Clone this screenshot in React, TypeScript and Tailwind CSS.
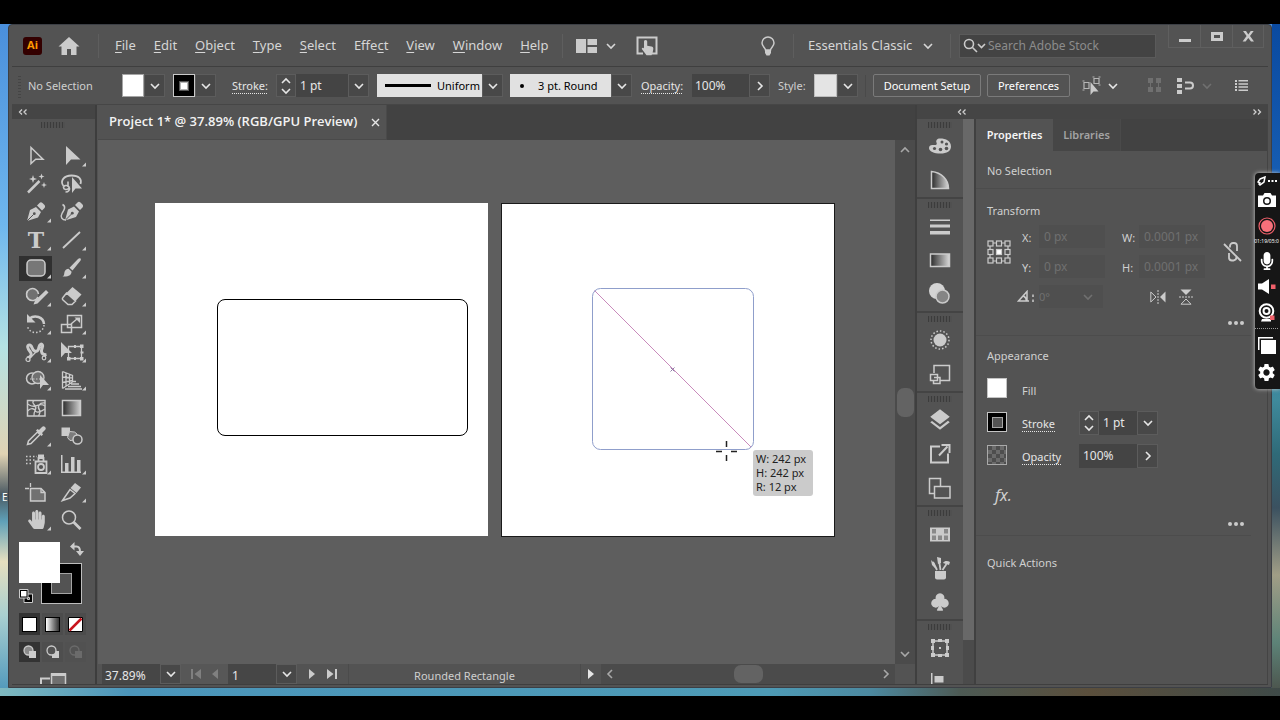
import type { ReactNode } from "react";
import clsx from "clsx";
import { BsSuitClubFill } from "react-icons/bs";
import { FaHandPaper, FaMicrophone } from "react-icons/fa";
import { MdLayers, MdSettings } from "react-icons/md";

const INK = "#cbcbcb";

/* ---------- small shared pieces ---------- */

type Dir = "up" | "down" | "left" | "right";

const CHEVRONS: Record<Dir, string> = {
  up: "M1 7l4-4 4 4",
  down: "M1 3l4 4 4-4",
  left: "M7 1L3 5l4 4",
  right: "M3 1l4 4-4 4",
};

function Chevron({ dir = "down", className }: { dir?: Dir; className?: string }) {
  return (
    <svg viewBox="0 0 10 10" className={clsx("size-[10px] shrink-0", className)} fill="none" stroke="currentColor" strokeWidth="1.6">
      <path d={CHEVRONS[dir]} />
    </svg>
  );
}

function DropButton({ label, dir = "down" }: { label: string; dir?: Dir }) {
  return (
    <button aria-label={label} className="flex w-[21px] shrink-0 items-center justify-center self-stretch border border-[#5c5c5c] bg-[#484848] text-[#e6e6e6]">
      <Chevron dir={dir} />
    </button>
  );
}

function Stepper({ label }: { label: string }) {
  return (
    <div className="flex w-5 flex-col items-center justify-center self-stretch border border-[#5c5c5c] bg-[#4b4b4b] text-[#e6e6e6]">
      <button aria-label={`Increase ${label}`} className="flex h-[10px] items-center">
        <Chevron dir="up" />
      </button>
      <button aria-label={`Decrease ${label}`} className="flex h-[10px] items-center">
        <Chevron />
      </button>
    </div>
  );
}

function Grip() {
  return <div className="h-[6px] w-6 bg-[repeating-linear-gradient(90deg,#3c3c3c_0_1px,#505050_1px_3px)]" />;
}

function DoubleChevron({ dir }: { dir: "left" | "right" }) {
  return (
    <svg viewBox="0 0 10 8" className="h-2 w-[10px]" fill="none" stroke="#cfcfcf" strokeWidth="1.3">
      <path d={dir === "left" ? "M4 1.5L1.5 4 4 6.5M8.500 1.500L6 4l2.500 2.500" : "M1.500 1.500L4 4 1.500 6.500M6 1.500L8.500 4 6 6.500"} />
    </svg>
  );
}

function Dots() {
  return (
    <svg viewBox="0 0 18 4" className="h-1 w-[18px]" fill={INK}>
      <circle cx="3" cy="2" r="2" />
      <circle cx="9" cy="2" r="2" />
      <circle cx="15" cy="2" r="2" />
    </svg>
  );
}

/* ---------- menu bar ---------- */

const MENUS = [
  ["", "F", "ile"],
  ["", "E", "dit"],
  ["", "O", "bject"],
  ["", "T", "ype"],
  ["", "S", "elect"],
  ["Effe", "c", "t"],
  ["", "V", "iew"],
  ["", "W", "indow"],
  ["", "H", "elp"],
];

function MenuBar() {
  return (
    <header className="flex h-[42px] shrink-0 items-center border-b border-[#3f3f3f] pl-[11px] text-[13px] text-[#d6d6d6]">
      <div className="flex h-[18px] w-[19px] items-center justify-center rounded-[3px] bg-[#330000] text-[11px] font-bold text-[#ff9a00]">Ai</div>
      <button aria-label="Home" className="ml-4">
        <svg viewBox="0 0 22 20" className="h-5 w-[22px]" fill={INK}>
          <path d="M11 1L.500 10.500H3.500V19H9V13h4v6h5.500v-8.500h3z" />
        </svg>
      </button>
      <div className="ml-[18px] h-6 w-px bg-[#5e5e5e]" />
      <nav className="ml-4 flex gap-[18px]">
        {MENUS.map(([before, key, after]) => (
          <button key={before + key + after}>
            {before}
            <span className="underline underline-offset-2">{key}</span>
            {after}
          </button>
        ))}
      </nav>
      <div className="ml-[14px] h-6 w-px bg-[#5e5e5e]" />
      <button aria-label="Arrange documents" className="ml-[13px] flex items-center gap-[9px]">
        <svg viewBox="0 0 21 14" className="h-[14px] w-[21px]" fill={INK}>
          <path d="M0 0h10v14H0zM11.500 0H21v6h-9.500zM11.500 8H21v6h-9.500z" />
        </svg>
        <Chevron />
      </button>
      <button aria-label="Touch workspace" className="ml-5">
        <svg viewBox="0 0 22 20" className="h-5 w-[22px]">
          <path d="M7 17.500H1.500V1.500h19v16H16" fill="none" stroke={INK} strokeWidth="2" />
          <path d="M9.500 4c1.200 0 1.700.8 1.700 1.800v4l4.300.8c1.300.3 2 1 1.800 2.300l-.8 4.600-1 1.700h-5L6 13.300c-.7-1 .6-2.100 1.600-1.300l.4.400V5.800C8 4.800 8.400 4 9.500 4z" fill={INK} />
        </svg>
      </button>

      <div className="ml-auto flex items-center self-stretch">
        <button aria-label="Learn">
          <svg viewBox="0 0 16 20" className="h-5 w-4">
            <path d="M5.500 14c0-2-3.500-3.500-3.500-7a6 6 0 0112 0c0 3.500-3.500 5-3.500 7z" fill="none" stroke={INK} strokeWidth="1.500" />
            <path d="M5 14h6v3l-1.500 2.500h-3L5 17z" fill={INK} />
          </svg>
        </button>
        <div className="ml-[17px] h-6 w-px bg-[#5e5e5e]" />
        <label className="ml-[14px] flex items-center gap-[9px]">
          <select aria-label="Workspace" className="w-[106px] appearance-none text-[13px]">
            <option>Essentials Classic</option>
          </select>
          <Chevron />
        </label>
        <div className="ml-[17px] h-6 w-px bg-[#5e5e5e]" />
        <label className="ml-2 flex h-6 w-[197px] items-center border border-[#5a5a5a] bg-[#434343] pl-[3px]">
          <svg viewBox="0 0 23 16" className="h-4 w-[23px] shrink-0" fill="none" stroke={INK} strokeWidth="1.600">
            <circle cx="6" cy="6" r="4.500" />
            <path d="M9.500 9.500L14 14M15 6l3.500 3.500L22 6" />
          </svg>
          <input aria-label="Search Adobe Stock" placeholder="Search Adobe Stock" className="ml-[2px] w-full text-[12px] placeholder:text-[#8c8c8c]" />
        </label>
        <div className="mr-1 ml-3 flex h-[23px] self-start border-b border-[#5f5f5f]">
          {[
            ["Minimize", "M1 9h12v3H1z"],
            ["Maximize", "M1 2h12v9H1zM4 5v3h6V5z"],
            ["Close", "M2 1h3l2.300 3.500L9.700 1h3L9 6l4 5.500h-3L7.300 8l-2.700 3.500h-3L5.600 6z"],
          ].map(([name, d]) => (
            <button key={name} aria-label={name} className="flex w-8 items-center justify-center border-l border-[#5f5f5f] last:border-r">
              <svg viewBox="0 0 14 13" className="h-[13px] w-[14px]" fill={INK} fillRule="evenodd">
                <path d={d} />
              </svg>
            </button>
          ))}
        </div>
      </div>
    </header>
  );
}

/* ---------- control bar ---------- */

function ControlBar() {
  return (
    <div className="flex h-[38px] shrink-0 items-center border-b border-[#464646] pl-[6px] text-[11px] leading-[18px] text-[#e6e6e6]">
      <div className="h-6 w-[3px] bg-[repeating-linear-gradient(0deg,#454545_0_1px,#535353_1px_3px)]" />
      <span className="ml-[7px] w-[94px] text-[#cfcfcf]">No Selection</span>

      <div className="flex h-[23px]">
        <button aria-label="Fill" className="w-[22px] border border-[#a5a5a5] bg-white" />
        <DropButton label="Fill options" />
      </div>
      <div className="ml-2 flex h-[23px]">
        <button aria-label="Stroke colour" className="flex w-[22px] items-center justify-center border border-[#c9c9c9] bg-black">
          <span className="size-2 border border-[#b5b5b5] bg-white ring-1 ring-[#555]" />
        </button>
        <DropButton label="Stroke colour options" />
      </div>

      <label htmlFor="bar-stroke" className="ml-4 w-11 shrink-0 underline decoration-dotted underline-offset-3">
        Stroke:
      </label>
      <div className="flex h-[23px]">
        <Stepper label="stroke" />
        <input id="bar-stroke" defaultValue="1 pt" className="w-[52px] bg-[#444444] pl-1 text-[12px]" />
        <DropButton label="Stroke weights" />
      </div>

      <div className="ml-2 flex h-[23px]">
        <label className="flex w-[105px] items-center gap-[6px] bg-[#e1e1e1] pl-2 text-black">
          <span className="h-[3px] w-[46px] shrink-0 bg-black" />
          <select aria-label="Width profile" className="w-full appearance-none">
            <option>Uniform</option>
          </select>
        </label>
        <DropButton label="Width profiles" />
      </div>
      <div className="ml-[7px] flex h-[23px]">
        <label className="flex w-[101px] items-center gap-[14px] bg-[#e1e1e1] pl-[10px] text-black">
          <span className="size-1 shrink-0 rounded-full bg-black" />
          <select aria-label="Brush" className="w-full appearance-none">
            <option>3 pt. Round</option>
          </select>
        </label>
        <DropButton label="Brushes" />
      </div>

      <label htmlFor="bar-opacity" className="ml-[9px] w-[51px] shrink-0 underline decoration-dotted underline-offset-3">
        Opacity:
      </label>
      <div className="flex h-[23px]">
        <input id="bar-opacity" defaultValue="100%" className="w-[57px] bg-[#444444] pl-[3px] text-[12px]" />
        <DropButton label="Opacity slider" dir="right" />
      </div>

      <span className="ml-2 w-9 text-[#cfcfcf]">Style:</span>
      <div className="flex h-[23px]">
        <button aria-label="Graphic style" className="w-[23px] border border-[#bdbdbd] bg-[#e4e4e4]" />
        <DropButton label="Graphic styles" />
      </div>
      <div className="ml-[7px] h-[22px] w-px bg-[#4a4a4a]" />
      <button className="ml-[7px] h-[23px] w-[108px] shrink-0 rounded-[2px] border border-[#7a7a7a] text-white">Document Setup</button>
      <button className="ml-[6px] h-[23px] w-[83px] shrink-0 rounded-[2px] border border-[#7a7a7a] text-white">Preferences</button>

      <button aria-label="Select similar objects" className="ml-3 flex items-center gap-[6px]">
        <svg viewBox="0 0 20 20" className="size-5" fill="none" stroke="#b5b5b5" strokeWidth="1.200">
          <path d="M2 6.500h5v6H2zM12 2.500h5v5h-5zM.500 5h2M.500 14h2M10.500 1h2M16.500 1h2M16.500 9h2" />
          <path d="M8.500 6v13l3-3.500h5z" fill={INK} stroke="none" />
        </svg>
        <Chevron />
      </button>

      <div className="mr-5 ml-auto flex items-center">
        <svg viewBox="0 0 13 15" className="h-[15px] w-[13px]" fill="#707070">
          <path d="M0 0h5v5H0zM8 0h5v5H8zM0 9h5v5H0zM8 9h5v5H8zM2 5h1v4H2zM10 5h1v4h-1z" />
        </svg>
        <button aria-label="Align to" className="ml-4 flex items-center gap-[7px]">
          <svg viewBox="0 0 18 16" className="h-4 w-[18px]" fill={INK}>
            <path d="M0 0h5v4H0zM0 6h5v4H0zM0 12h5v4H0z" />
            <path d="M8 4.500h5a3 3 0 010 6H8" fill="none" stroke={INK} strokeWidth="2" />
          </svg>
          <Chevron className="text-[#707070]" />
        </button>
        <button aria-label="Bar options" className="ml-[23px]">
          <svg viewBox="0 0 13 11" className="h-[11px] w-[13px]" fill={INK}>
            <path d="M0 0h2v2H0zM3.500 0H13v1.500H3.500zM0 3h2v2H0zM3.500 3.200H13v1.500H3.500zM0 6h2v2H0zM3.500 6.300H13v1.500H3.500zM0 9h2v2H0zM3.500 9.400H13v1.500H3.500z" />
          </svg>
        </button>
      </div>
    </div>
  );
}

/* ---------- tools ---------- */

type Tool = { name: string; art: ReactNode; more?: boolean; active?: boolean };

const nib = "M7 21l3-11 6-3 5 5-3 5.500zM17 5.500l2.500-2.500c1-1 2-.8 3 0l2 2c.8 1 .8 2 0 3L22 10.500z";

const TOOLS: Tool[] = [
  { name: "Selection", art: <path d="M11 3.500v16l4.700-4.200H23z" fill="none" strokeWidth="1.500" /> },
  { name: "Direct selection", more: true, art: <path d="M11 2v19l5-5.500h9.500z" stroke="none" /> },
  {
    name: "Magic wand",
    art: (
      <>
        <path d="M8 20.500L19.500 9" strokeWidth="2.500" />
        <path d="M13 3l1 3 3 1-3 1-1 3-1-3-3-1 3-1zM21.500 1.500l.8 2.200 2.200.8-2.200.8-.8 2.200-.8-2.200-2.200-.8 2.200-.8zM24 10l.8 2.200 2.200.8-2.200.8L24 16l-.8-2.200-2.200-.8 2.200-.8z" stroke="none" />
      </>
    ),
  },
  {
    name: "Lasso",
    art: (
      <>
        <path d="M8.500 14C4.500 9 9 3.500 16.500 3.500S27 7 25.500 12" fill="none" strokeWidth="1.800" />
        <path d="M14 16c-2 2.500-5.500 1.500-5.500-.5s4-3 5.500-.5c1.500 2.500-.5 5-3.500 5M13 9.500V15" fill="none" strokeWidth="1.600" />
        <path d="M17 5v16l3.500-4.500H27z" stroke="none" />
      </>
    ),
  },
  {
    name: "Pen",
    more: true,
    art: (
      <>
        <path d={nib} stroke="none" />
        <path d="M7 21l6.500-6.500" stroke="#535353" strokeWidth="1" />
        <circle cx="14.300" cy="13.700" r="1.400" fill="#535353" stroke="none" />
      </>
    ),
  },
  {
    name: "Curvature",
    art: (
      <>
        <g transform="translate(3 -.500)">
          <path d={nib} stroke="none" />
          <path d="M7 21l6.500-6.500" stroke="#535353" strokeWidth="1" />
          <circle cx="14.300" cy="13.700" r="1.400" fill="#535353" stroke="none" />
        </g>
        <path d="M7.500 4.500c4 2 1.500 5.500-.5 9s0 6.500 4 6.500" fill="none" strokeWidth="1.500" />
      </>
    ),
  },
  {
    name: "Type",
    more: true,
    art: (
      <text x="16" y="20" textAnchor="middle" stroke="none" className="font-['DejaVu_Serif',serif] text-[22px] font-bold">
        T
      </text>
    ),
  },
  { name: "Line segment", more: true, art: <path d="M8 20L25 4" strokeWidth="1.800" /> },
  { name: "Rounded rectangle", more: true, active: true, art: <rect x="7" y="4" width="18" height="16" rx="4" fill="#777" strokeWidth="1.500" /> },
  {
    name: "Paintbrush",
    more: true,
    art: (
      <path d="M25.500 2.500c.8.800.3 1.700-.3 2.500l-7.700 9.500-3-2.800L23 3c.8-.7 1.700-1.200 2.500-.5zM13.500 12.700l3 2.800c.3 3.500-3 5.500-9 5 2-1 1.500-2.500 2-4.500s2-3.300 4-3.300z" stroke="none" />
    ),
  },
  {
    name: "Shaper",
    more: true,
    art: (
      <>
        <path d="M18 13a6 6 0 11.500-3" fill="#717171" strokeWidth="1.600" />
        <path d="M13.500 20.500l1.500-4L26 6l2.500 2.500-11 11z" stroke="none" />
      </>
    ),
  },
  {
    name: "Eraser",
    more: true,
    art: (
      <>
        <path d="M17.500 3L26.500 10.500l-6 6.500-9-8z" stroke="none" />
        <path d="M11.500 9l9 8-3.500 3.500h-4l-5-4.500c-.8-.8-.8-1.700 0-2.500z" fill="none" strokeWidth="1.500" />
      </>
    ),
  },
  {
    name: "Rotate",
    more: true,
    art: (
      <>
        <path d="M9.500 6.500c5-4 14-2 14.500 5.500" fill="none" strokeWidth="2.500" />
        <path d="M7 2v8.500h8.500z" stroke="none" />
        <path d="M24 13c-.5 9-14 10.500-16.500 1.500" fill="none" strokeWidth="1.500" strokeDasharray="1.500 2" />
      </>
    ),
  },
  {
    name: "Scale",
    more: true,
    art: (
      <>
        <path d="M12.500 3.500h14v12h-14zM6.500 12.500h10v8h-10z" fill="none" strokeWidth="1.500" />
        <path d="M16 12l6-5" strokeWidth="1.500" />
        <path d="M19.500 5.500H25V11z" stroke="none" />
      </>
    ),
  },
  {
    name: "Puppet warp",
    more: true,
    art: (
      <>
        <path d="M7 18c5-1 5-4 3-6.500C7.500 8.500 6.500 5 9.500 5s2 5 5 6 4-1 4.500-4 2.500-3.500 3.500-2-1.500 4-1 6.500 2.500 3.500 5 3" fill="none" strokeWidth="3" />
        <path d="M8.500 19.500L23 5" strokeWidth="1.300" />
        <circle cx="8" cy="19.500" r="2" fill="#535353" strokeWidth="1.200" />
        <circle cx="24" cy="18" r="1.800" fill="#535353" strokeWidth="1.200" />
      </>
    ),
  },
  {
    name: "Free transform",
    more: true,
    art: (
      <>
        <path d="M13.500 6.500h13v12h-13z" fill="none" strokeWidth="1.300" />
        <path d="M25 4.500h3.500V8H25zM25 17h3.500v3.500H25zM12 17h3.500v3.500H12zM19 5h2v3h-2zM19 17h2v3h-2zM25.500 11.500h3v2h-3z" stroke="none" />
        <path d="M6 2v15.500l4-4.500h7z" stroke="none" />
      </>
    ),
  },
  {
    name: "Shape builder",
    more: true,
    art: (
      <>
        <circle cx="12" cy="10.500" r="5.500" fill="none" strokeWidth="1.500" />
        <circle cx="18" cy="9.500" r="6" fill="#717171" strokeWidth="1.300" />
        <path d="M10 11h11" strokeDasharray="1.500 1.500" />
        <path d="M20 7v14l3-4h6z" stroke="none" />
      </>
    ),
  },
  {
    name: "Perspective grid",
    more: true,
    art: (
      <path d="M7.500 3.500v17M7.500 3.500l10 4v6.500l-10 6.500M11 5v13M14.500 6.500V16M7.500 9l10 .8M7.500 14.500l10-2M18 13.500h3M16 16h8M13 18.500h13M10 21h17" fill="none" strokeWidth="1.300" />
    ),
  },
  {
    name: "Mesh",
    art: (
      <>
        <path d="M7.500 4.500h17.500v15.500H7.500z" fill="none" strokeWidth="1.500" />
        <path d="M14 4.500c-4 3 4 5 1.500 9-1 2-2 4-1.500 6.500M25 7c-6-1-8 4-5.500 7 1.500 2 0 4-1 6M7.500 8c4 2 4 3 8 2s5-3 9.500 0M7.500 15c4-4 7-2 8 0s5 1 9.500-2" fill="none" strokeWidth="1.300" />
      </>
    ),
  },
  { name: "Gradient", art: <rect x="7.500" y="4.500" width="18" height="15" fill="url(#grad-ramp)" strokeWidth="1.500" /> },
  {
    name: "Eyedropper",
    more: true,
    art: (
      <>
        <path d="M7.500 20.500l1-3.500 9-9 2.500 2.500-9 9z" fill="none" strokeWidth="1.500" />
        <path d="M16 6.500l1.500-1.500 1.500 1 3-3c1-1 2.300-.8 3 0 1 .8 1 2 0 3l-3 3 1 1.500L21.500 12z" stroke="none" />
      </>
    ),
  },
  {
    name: "Blend",
    art: (
      <>
        <path d="M6.500 3.500H15V12H6.500z" stroke="none" />
        <path d="M14.500 7.500l5 .5 2.500 2-2 6-5 .500-2.500-3z" fill="#7c7c7c" />
        <circle cx="22.500" cy="15.500" r="4.500" fill="#535353" strokeWidth="1.500" />
      </>
    ),
  },
  {
    name: "Symbol sprayer",
    more: true,
    art: (
      <>
        <path d="M15.500 9.500h11v11.500h-11zM18.500 9V6h5v3" fill="none" strokeWidth="1.800" />
        <path d="M18 2.500h6v4h-6z" stroke="none" />
        <circle cx="21" cy="15" r="3" fill="none" strokeWidth="1.800" />
        <path d="M6 4.500h11M6 8h9M6 11.500h7" strokeWidth="1.500" strokeDasharray="1.500 2" />
      </>
    ),
  },
  { name: "Column graph", more: true, art: <path d="M6 3v18h20v-1.500H7.500V3zM10 11h3.500v8.500H10zM16 5h3.500v14.500H16zM22 8h3.500v11.500H22z" stroke="none" /> },
  {
    name: "Artboard",
    art: (
      <>
        <path d="M10.500 8.500H21l4 4v8.500H10.500z" fill="#717171" strokeWidth="1.500" />
        <path d="M5 8.500h4M10.500 3v4M21 8.500v4h4" fill="none" strokeWidth="1.300" />
      </>
    ),
  },
  {
    name: "Slice",
    more: true,
    art: (
      <>
        <path d="M7.500 20.500L15 9.500l5 4-5 4.500z" fill="none" strokeWidth="1.500" />
        <path d="M15.500 8l4.500-5 6 4.500-4.500 5.500z" stroke="none" />
      </>
    ),
  },
  { name: "Hand", more: true, art: <FaHandPaper x="7" y="2" size={19} color={INK} strokeWidth="0" /> },
  {
    name: "Zoom",
    art: (
      <>
        <circle cx="14" cy="9.500" r="6.500" fill="none" strokeWidth="1.500" />
        <path d="M18.500 14l7 7" strokeWidth="2.800" />
      </>
    ),
  },
];

function ToolPanel() {
  return (
    <aside className="flex w-[85px] shrink-0 flex-col border-r-2 border-[#3d3d3d]">
      <div className="flex h-[14px] shrink-0 items-center bg-[#454545] pl-[6px]">
        <DoubleChevron dir="left" />
      </div>
      <div className="flex min-h-0 flex-1 flex-col overflow-hidden pl-[7px]">
        <div className="flex h-[23px] shrink-0 justify-center pt-[3px] pr-2">
          <Grip />
        </div>
        <div className="grid shrink-0 grid-cols-[35px_35px]">
          {TOOLS.map((tool) => (
            <div key={tool.name} className="flex h-7 items-center">
              <button aria-label={tool.name} className={clsx("flex h-[25px] w-[33px] items-center justify-center", tool.active && "bg-[#303030]")}>
                <svg viewBox="0 0 32 24" className="h-6 w-8" fill={INK} stroke={INK}>
                  <defs>
                    <linearGradient id="grad-ramp">
                      <stop offset="0" stopColor="#2a2a2a" />
                      <stop offset="1" stopColor="#d0d0d0" />
                    </linearGradient>
                  </defs>
                  {tool.art}
                  {tool.more && <path d="M31 18.500v4h-4z" stroke="none" />}
                </svg>
              </button>
            </div>
          ))}
        </div>

        {/* fill and stroke */}
        <div className="relative mt-2 h-[64px] w-[70px] shrink-0">
          <button aria-label="Stroke swatch" className="absolute top-[21px] left-[22px] flex size-[41px] items-center justify-center border border-[#bdbdbd] bg-black">
            <span className="size-[21px] border border-[#a5a5a5] bg-[#535353]" />
          </button>
          <button aria-label="Fill swatch" className="absolute top-0 left-0 size-[41px] bg-white" />
          <button aria-label="Swap fill and stroke" className="absolute top-0 left-[51px]">
            <svg viewBox="0 0 14 14" className="size-[14px]">
              <path d="M3 4.500h3.500c2 0 3.500 1 3.500 5" fill="none" stroke={INK} strokeWidth="2" />
              <path d="M4.500 0v8.500L0 4.500zM6 9h8l-4 5z" fill={INK} />
            </svg>
          </button>
          <button aria-label="Default fill and stroke" className="absolute top-[47px] left-0">
            <svg viewBox="0 0 14 14" className="size-[14px]">
              <path d="M5 5h8.500v8.500H5z" fill="#000" stroke={INK} />
              <path d="M8.500 8.500h2v2h-2z" fill="#535353" stroke={INK} />
              <path d="M.500.500h8.500v8.500H.500z" fill="#000" stroke={INK} />
              <path d="M2 2h5.500v5.500H2z" fill="#fff" />
            </svg>
          </button>
        </div>
        <div className="mt-[7px] flex shrink-0 gap-[2px]">
          <button aria-label="Color" className="flex h-[22px] w-[21px] items-center justify-center bg-[#333]">
            <span className="size-[15px] border border-black bg-white" />
          </button>
          <button aria-label="Gradient fill" className="flex h-[22px] w-[21px] items-center justify-center bg-[#4c4c4c]">
            <span className="size-[15px] border border-black bg-linear-to-r from-white to-[#333]" />
          </button>
          <button aria-label="None" className="flex h-[22px] w-[21px] items-center justify-center bg-[#4c4c4c]">
            <svg viewBox="0 0 15 15" className="size-[15px]">
              <path d="M.500.500h14v14H.500z" fill="#fff" stroke="#000" />
              <path d="M1.500 13.500l12-12" stroke="#c8141e" strokeWidth="2.500" />
            </svg>
          </button>
        </div>
        <div className="mt-[7px] flex shrink-0 gap-[2px]">
          {["Draw normal", "Draw behind", "Draw inside"].map((name, i) => (
            <button key={name} aria-label={name} className={clsx("flex h-5 w-[21px] items-center justify-center", i === 0 ? "bg-[#333]" : "bg-[#4e4e4e]", i === 2 && "opacity-20")}>
              <svg viewBox="0 0 14 14" className="size-[14px]">
                <path d="M6 6h7v7H6z" fill={INK} />
                <circle cx="5.500" cy="5.500" r="4.500" fill={i === 0 ? "#8a8a8a" : "#535353"} stroke={INK} strokeWidth="1.300" />
                {i !== 1 && <path d="M6 6h7v7H6z" fill={INK} />}
              </svg>
            </button>
          ))}
        </div>
        <button aria-label="Screen mode" className="mt-[10px] ml-[21px] h-[13px] w-[27px] shrink-0 overflow-hidden">
          <svg viewBox="0 0 27 13" className="h-[13px] w-[27px]">
            <path d="M1 13V6.500h9" fill="none" stroke={INK} strokeWidth="2" />
            <path d="M11.500 13V2h14v11" fill="#6f6f6f" stroke={INK} strokeWidth="1.500" />
            <path d="M11 1h15v3H11z" fill={INK} />
          </svg>
        </button>
      </div>
    </aside>
  );
}

/* ---------- document ---------- */

function Canvas() {
  return (
    <div className="relative min-w-0 flex-1 overflow-hidden bg-[#5e5e5e]">
      <div className="absolute top-[63px] left-[57px] size-[333px] bg-white" />
      <div className="absolute top-[63px] left-[403px] size-[334px] border border-[#1a1a1a] bg-white" />
      <div className="absolute top-[159px] left-[119px] h-[137px] w-[251px] rounded-lg border border-black" />
      <svg viewBox="0 0 180 180" className="absolute top-[147px] left-[493px] size-[180px]" fill="none">
        <rect x="1.500" y="1.500" width="161" height="161" rx="8" stroke="#8f9ecb" />
        <path d="M3.500 3.500L160 160" stroke="#c98bbb" />
        <path d="M79.500 80.500l4 4M83.500 80.500l-4 4" stroke="#8d7fa8" />
        <path d="M135.500 154v6M135.500 168v6M125 164.500h6M140 164.500h6" stroke="#222" strokeWidth="1.500" />
      </svg>
      <div className="absolute top-[310px] left-[655px] w-[60px] rounded-[3px] bg-[#cbcbcb] px-[3px] py-[2px] text-[11px] leading-[14px] text-[#222]">
        <p>W: 242 px</p>
        <p>H: 242 px</p>
        <p>R: 12 px</p>
      </div>
    </div>
  );
}

function StatusBar() {
  return (
    <footer className="flex h-5 shrink-0 items-stretch bg-[#535353] pl-1 text-[12px] leading-4 text-[#e6e6e6]">
      <input aria-label="Zoom level" defaultValue="37.89%" className="w-[58px] bg-[#464646] pt-1 pl-[3px]" />
      <DropButton label="Zoom levels" />
      <div className="flex w-[47px] items-center justify-center gap-[11px] bg-[#575757]">
        <button aria-label="First artboard" disabled>
          <svg viewBox="0 0 10 10" className="size-[10px]" fill="#808080">
            <path d="M0 0h2v10H0zM10 0v10L3.500 5z" />
          </svg>
        </button>
        <button aria-label="Previous artboard" disabled>
          <svg viewBox="0 0 6 10" className="h-[10px] w-[6px]" fill="#808080">
            <path d="M6 0v10L0 5z" />
          </svg>
        </button>
      </div>
      <input aria-label="Artboard" defaultValue="1" className="w-[48px] bg-[#464646] pt-1 pl-1" />
      <DropButton label="Artboards" />
      <div className="flex w-[52px] items-center justify-center gap-3 border-r border-[#4b4b4b]">
        <button aria-label="Next artboard">
          <svg viewBox="0 0 6 10" className="h-[10px] w-[6px]" fill={INK}>
            <path d="M0 0v10l6-5z" />
          </svg>
        </button>
        <button aria-label="Last artboard">
          <svg viewBox="0 0 10 10" className="size-[10px]" fill={INK}>
            <path d="M0 0v10l6.500-5zM8 0h2v10H8z" />
          </svg>
        </button>
      </div>
      <span className="flex w-[231px] items-center justify-center pt-1 text-[11px] text-[#cfcfcf]">Rounded Rectangle</span>
      <button aria-label="Status options" className="flex w-[21px] items-center justify-center border-l border-[#4b4b4b]">
        <svg viewBox="0 0 6 10" className="h-[10px] w-[6px]" fill="#e6e6e6">
          <path d="M0 0v10l6-5z" />
        </svg>
      </button>
      <div className="flex flex-1 items-center justify-between bg-[#4b4b4b] px-1 text-[#a8a8a8]">
        <Chevron dir="left" />
        <div className="h-[18px] w-[29px] rounded-[7px] bg-[#636363]" />
        <Chevron dir="right" />
      </div>
      <div className="w-5" />
    </footer>
  );
}

function DocumentArea() {
  return (
    <main className="flex min-w-0 flex-1 flex-col pl-px">
      <div className="flex h-[35px] shrink-0 bg-[#424242]">
        <div className="flex w-[289px] items-center justify-between border-r border-b border-[#4a4a4a] bg-[#535353] pr-[6px] pl-[11px]">
          <h1 className="font-['Open_Sans','Noto_Sans',sans-serif] text-[13px] font-semibold whitespace-nowrap text-[#f2f2f2]">Project 1* @ 37.89% (RGB/GPU Preview)</h1>
          <button aria-label="Close document">
            <svg viewBox="0 0 9 9" className="size-[9px]" stroke="#e6e6e6" strokeWidth="1.400">
              <path d="M1 1l7 7M8 1L1 8" />
            </svg>
          </button>
        </div>
      </div>
      <div className="flex min-h-0 flex-1">
        <Canvas />
        <div className="flex w-5 shrink-0 flex-col items-center justify-between bg-[#4b4b4b] py-[5px] text-[#a8a8a8]">
          <Chevron dir="up" />
          <div className="h-[29px] w-[17px] rounded-[7px] bg-[#636363]" />
          <Chevron />
        </div>
      </div>
      <StatusBar />
    </main>
  );
}

/* ---------- collapsed panel dock ---------- */

const DOCK: { name: string; art: ReactNode }[][] = [
  [
    {
      name: "Color",
      art: (
        <>
          <path d="M12 4.500c6 0 11 2.500 11 8 0 4.500-4 7-10.500 7C6 19.500 1 17.500 1 14c0-2.500 2-3.500 4.500-3 2.500.3 4-.5 3-2.500-.8-1.800.5-4 3.500-4z" stroke="none" />
          <g fill="#535353" stroke="none">
            <circle cx="14" cy="8" r="1.500" />
            <circle cx="18.500" cy="10" r="1.600" />
            <circle cx="18.500" cy="14.500" r="1.800" />
            <circle cx="12.500" cy="15.500" r="1.800" />
            <circle cx="6.500" cy="14.500" r="1.600" />
          </g>
        </>
      ),
    },
    { name: "Color guide", art: <path d="M3.500 3.500v17h17c0-9-7-16-17-17z" fill="url(#dock-ramp)" strokeWidth="1.500" /> },
  ],
  [
    { name: "Stroke", art: <path d="M2 5.500h20v1.500H2zM2 10.500h20v3H2zM2 17h20v3.500H2z" stroke="none" /> },
    { name: "Gradient", art: <rect x="2.500" y="6" width="19" height="12.500" fill="url(#dock-ramp)" strokeWidth="1.500" /> },
    {
      name: "Transparency",
      art: (
        <>
          <circle cx="9" cy="9" r="8" fill="#d4d4d4" stroke="none" />
          <circle cx="14.500" cy="14.500" r="6.500" fill="#858585" strokeWidth="1.500" />
        </>
      ),
    },
  ],
  [
    {
      name: "Appearance",
      art: (
        <>
          <circle cx="12" cy="12" r="6.500" stroke="none" />
          <circle cx="12" cy="12" r="9" fill="none" strokeWidth="1.500" strokeDasharray="1.500 2" />
        </>
      ),
    },
    {
      name: "Graphic styles",
      art: <path d="M6 11V3.500h15.500v15H12M2.500 12.500h7v6h-7zM6 15.500h6v6H5.500v-3" fill="none" strokeWidth="1.500" />,
    },
  ],
  [
    { name: "Layers", art: <MdLayers x="-1" y="-1" size={26} color={INK} strokeWidth="0" /> },
    {
      name: "Asset export",
      art: (
        <>
          <path d="M12 4.500H3v16h17v-9" fill="none" strokeWidth="2" />
          <path d="M11 13.500l8.500-9M13.500 3h8v8" fill="none" strokeWidth="2" />
        </>
      ),
    },
    { name: "Artboards", art: <path d="M6 17.500H1.500V2.500h11V10M6.500 10.500h15.500v11.500H6.500z" fill="none" strokeWidth="1.500" /> },
  ],
  [
    {
      name: "Swatches",
      art: (
        <>
          <path d="M2 5.500h20v14H2z" stroke="none" />
          <path d="M4 7h4v4.500H4zM4 13.500h4V18H4zM10 13.500h4V18h-4zM16 13.500h4V18h-4zM16 7h4v4.500h-4z" fill="#8a8a8a" stroke="none" />
        </>
      ),
    },
    {
      name: "Brushes",
      art: (
        <>
          <path d="M7 15h11v6.500a2 2 0 01-2 2H9a2 2 0 01-2-2z" stroke="none" />
          <path d="M9 14L5 6M12.500 14L11 4M14.500 14l4-6" strokeWidth="1.800" />
          <path d="M3 4l4 4v4L4 9zM9 1l4 1v5l-3 1zM15 7c2-3 5-2 7-1l-1 3z" stroke="none" />
        </>
      ),
    },
    { name: "Symbols", art: <BsSuitClubFill x="2" y="2" size={20} color={INK} /> },
  ],
  [
    {
      name: "Transform",
      art: (
        <>
          <path d="M5 5h14v14H5z" fill="none" strokeWidth="1.500" />
          <path d="M3 3h4v4H3zM10 3h4v3h-4zM17 3h4v4h-4zM3 10h3v4H3zM18 10h3v4h-3zM3 17h4v4H3zM10 18h4v3h-4zM17 17h4v4h-4zM11 11h2v2h-2z" stroke="none" />
        </>
      ),
    },
    { name: "Align", art: <path d="M3 3h1.500v19H3zM6.500 6h9v6.500h-9zM6.500 15h14v6h-14z" stroke="none" /> },
  ],
];

function PanelDock() {
  return (
    <aside className="flex min-h-0 flex-1">
      <div className="flex w-[46px] flex-col overflow-hidden">
        {DOCK.map((group) => (
          <div key={group[0].name} className="flex shrink-0 flex-col items-center border-b-2 border-[#444444] pt-[3px]">
            <Grip />
            <div className="flex flex-col py-px">
              {group.map((panel) => (
                <button key={panel.name} aria-label={panel.name} className="flex h-[34px] w-[46px] items-center justify-center last:h-[33px]">
                  <svg viewBox="0 0 24 24" className="size-6" fill={INK} stroke={INK}>
                    <defs>
                      <linearGradient id="dock-ramp">
                        <stop offset="0" stopColor="#2a2a2a" />
                        <stop offset="1" stopColor="#d8d8d8" />
                      </linearGradient>
                    </defs>
                    {panel.art}
                  </svg>
                </button>
              ))}
            </div>
          </div>
        ))}
      </div>
      <div className="flex w-[11px] flex-col bg-[#4b4b4b] pb-[44px]">
        <div className="flex-1 bg-[#686868]" />
      </div>
    </aside>
  );
}

/* ---------- properties ---------- */

function TransformField({ id, label, value }: { id: string; label: string; value: string }) {
  return (
    <div className="flex items-center">
      <label htmlFor={id} className="w-[17px] pt-[3px] text-[#cfcfcf]">
        {label}
      </label>
      <input id={id} defaultValue={value} disabled className="h-[23px] w-[66px] bg-[#4f4f4f] pl-[5px] text-[12px] text-[#707070]" />
    </div>
  );
}

function PropertiesPanel() {
  return (
    <aside className="flex min-h-0 flex-1 flex-col text-[11px] leading-[18px] text-[#d0d0d0]">
      <div role="tablist" className="flex h-8 shrink-0 bg-[#424242] font-semibold">
        <button role="tab" aria-selected="true" className="w-[77px] bg-[#535353] text-[#f5f5f5]">
          Properties
        </button>
        <button role="tab" aria-selected="false" className="w-[68px] border-r border-[#4a4a4a] bg-[#464646] text-[#a3a3a3]">
          Libraries
        </button>
      </div>

      <h2 className="mr-4 h-[38px] shrink-0 border-b border-[#4c4c4c] pt-[11px] pl-[11px]">No Selection</h2>

      <section className="mr-4 h-[147px] shrink-0 border-b border-[#4c4c4c] pt-[13px] pl-[11px]">
        <h2>Transform</h2>
        <div className="mt-[5px] flex items-center">
          <svg viewBox="0 0 24 24" className="size-6" fill="none" stroke={INK} strokeWidth="1.200">
            <path d="M3 3h18v18H3z" />
            {[1, 9.5, 18].map((y) =>
              [1, 9.5, 18].map((x) => (
                <rect key={`${x}-${y}`} x={x} y={y} width="5" height="5" fill={x === 9.5 && y === 9.5 ? "#fff" : "#535353"} />
              ))
            )}
          </svg>
          <div className="ml-[11px] grid grid-cols-[100px_94px] gap-y-[7px]">
            <TransformField id="prop-x" label="X:" value="0 px" />
            <TransformField id="prop-w" label="W:" value="0.0001 px" />
            <TransformField id="prop-y" label="Y:" value="0 px" />
            <TransformField id="prop-h" label="H:" value="0.0001 px" />
          </div>
          <button aria-label="Constrain proportions" className="ml-[6px]">
            <svg viewBox="0 0 20 22" className="h-[22px] w-5" fill="none" stroke={INK} strokeWidth="1.800">
              <path d="M8 6.500V5a3 3 0 013-3h1a3 3 0 013 3v5M14.500 16a3.500 3.500 0 01-3 3.500H10A3 3 0 017 17v-5" />
              <path d="M2 3l17 17" />
            </svg>
          </button>
        </div>
        <div className="mt-[7px] flex items-center pl-[30px]">
          <label className="flex items-center">
            <svg viewBox="0 0 18 13" className="h-[13px] w-[18px]" fill="none" stroke={INK} strokeWidth="1.500">
              <path d="M12 11H1.500L10 1.500V11M6.500 6a6 6 0 013 5" />
              <path d="M16 4.500V7M16 9.500V12" />
            </svg>
            <select disabled aria-label="Rotate" className="ml-1 h-[23px] w-[44px] appearance-none bg-[#4f4f4f] text-[#707070] opacity-100">
              <option>0°</option>
            </select>
            <span className="flex h-[23px] w-[20px] items-center bg-[#4f4f4f] text-[#707070]">
              <Chevron />
            </span>
          </label>
          <button aria-label="Flip horizontal" className="ml-[47px]">
            <svg viewBox="0 0 16 14" className="h-[14px] w-4" fill={INK} stroke={INK}>
              <path d="M.800 2v10L6 7z" fill="none" />
              <path d="M15.500 1.500v11L10 7z" stroke="none" />
              <path d="M8 0v14" strokeDasharray="2 1" />
            </svg>
          </button>
          <button aria-label="Flip vertical" className="ml-[13px]">
            <svg viewBox="0 0 14 16" className="h-4 w-[14px]" fill={INK} stroke={INK}>
              <path d="M2 15.200h10L7 10z" fill="none" />
              <path d="M1.500.500h11L7 6z" stroke="none" />
              <path d="M0 8h14" strokeDasharray="2 1" />
            </svg>
          </button>
        </div>
        <button aria-label="More transform options" className="mt-[13px] ml-[240px] flex h-1 items-center">
          <Dots />
        </button>
      </section>

      <section className="mr-4 h-[200px] shrink-0 border-b border-[#4c4c4c] pt-[11px] pl-[11px]">
        <h2>Appearance</h2>
        <div className="mt-[13px] flex h-[33px] items-start">
          <button aria-label="Fill color" className="size-5 border border-[#c4c4c4] bg-white" />
          <span className="ml-[15px] pt-1">Fill</span>
        </div>
        <div className="flex h-[33px] items-start">
          <button aria-label="Stroke color" className="mt-px flex size-5 items-center justify-center border border-[#c4c4c4] bg-black">
            <span className="size-[11px] border border-[#a5a5a5] bg-[#535353]" />
          </button>
          <label htmlFor="prop-stroke" className="ml-[15px] w-[57px] pt-1 underline decoration-dotted underline-offset-3 text-[#e6e6e6]">
            Stroke
          </label>
          <div className="flex h-6 text-[12px] text-[#e6e6e6]">
            <Stepper label="stroke weight" />
            <input id="prop-stroke" defaultValue="1 pt" className="w-[38px] bg-[#444444] pl-1" />
            <DropButton label="Stroke weight presets" />
          </div>
        </div>
        <div className="flex h-[34px] items-start">
          <button aria-label="Opacity mask" className="mt-px size-5 border border-[#a9a9a9] bg-[repeating-conic-gradient(#6b6b6b_0_25%,#4e4e4e_0_50%)] bg-size-[8px_8px]" />
          <label htmlFor="prop-opacity" className="ml-[15px] w-[57px] pt-1 underline decoration-dotted underline-offset-3 text-[#e6e6e6]">
            Opacity
          </label>
          <div className="flex h-6 text-[12px] text-[#e6e6e6]">
            <input id="prop-opacity" defaultValue="100%" className="w-[58px] bg-[#444444] pl-1" />
            <DropButton label="Opacity slider" dir="right" />
          </div>
        </div>
        <button aria-label="Effects" className="ml-2 block h-[34px] text-[16px] italic">
          fx.
        </button>
        <button aria-label="More appearance options" className="mt-[10px] ml-[240px] flex h-1 items-center">
          <Dots />
        </button>
      </section>

      <h2 className="pt-[18px] pl-[11px]">Quick Actions</h2>
    </aside>
  );
}

/* ---------- screen recorder ---------- */

function Recorder() {
  return (
    <div className="absolute top-[149px] right-0 flex h-[216px] w-[25px] flex-col items-center rounded-l-[4px] bg-[#161616] pr-[2px] text-white shadow-[0_0_4px_#c8c8c8]">
      <svg viewBox="0 0 20 10" className="mt-[3px] h-[10px] w-5 shrink-0" fill="#fff">
        <path d="M3 3l5-2-1 5-4 3-1-1 1-1-2-1z" fill="none" stroke="#fff" strokeWidth="1.500" />
        <path d="M11 4h2v2h-2zM14.500 4h2v2h-2zM18 4h2v2h-2z" />
      </svg>
      <button aria-label="Take screenshot" className="mt-[7px]">
        <svg viewBox="0 0 18 14" className="h-[14px] w-[18px]" fill="#fff" fillRule="evenodd">
          <path d="M0 2.500h5L6.500 0h6L14 2.500h4V14H0zM9 4a4 4 0 100 8 4 4 0 000-8zM9 5.500a2.500 2.500 0 110 5 2.500 2.500 0 010-5z" />
        </svg>
      </button>
      <button aria-label="Stop recording" className="mt-[10px]">
        <svg viewBox="0 0 18 18" className="size-[18px]">
          <circle cx="9" cy="9" r="8" fill="none" stroke="#f0606a" strokeWidth="1.200" />
          <circle cx="9" cy="9" r="6" fill="#f8707a" />
        </svg>
      </button>
      <p className="mt-px text-[5px] leading-[10px] whitespace-nowrap">01:19/05:0</p>
      <button aria-label="Microphone" className="mt-[6px]">
        <FaMicrophone size={18} />
      </button>
      <button aria-label="Speaker" className="mt-[9px]">
        <svg viewBox="0 0 18 15" className="h-[15px] w-[18px]" fill="#fff">
          <path d="M0 4.500h4L11 0v15L4 10.500H0z" />
          <path d="M13 5.500h4.500V10H13z" fill="#f0606a" />
        </svg>
      </button>
      <button aria-label="Webcam" className="mt-[9px]">
        <svg viewBox="0 0 18 19" className="h-[19px] w-[18px]">
          <circle cx="8.500" cy="8" r="6.800" fill="none" stroke="#fff" strokeWidth="2" />
          <circle cx="8.500" cy="8" r="3" fill="none" stroke="#fff" strokeWidth="2" />
          <path d="M4 16h9v2.500H3z" fill="#fff" />
          <path d="M12 12.500h4.500V17H12z" fill="#f0606a" />
        </svg>
      </button>
      <div className="mt-[6px] w-full border-t border-dotted border-[#9a9a9a]" />
      <button aria-label="Whiteboard" className="mt-2">
        <svg viewBox="0 0 18 17" className="h-[17px] w-[18px]" fill="#fff">
          <path d="M0 0h15v1.500H1.500V13H0zM3 3h15v14H3z" />
        </svg>
      </button>
      <button aria-label="Recorder settings" className="mt-2">
        <MdSettings size={21} />
      </button>
    </div>
  );
}

export default function App() {
  return (
    <div className="h-screen bg-black py-6 font-['Noto_Sans','Open_Sans',sans-serif]">
      <div className="relative flex h-full flex-col bg-[linear-gradient(180deg,#4a8fdc_0%,#6fb7ee_30%,#b4e2e4_48%,#e0d3b4_64%,#4b5a63_70%,#5fa0b8_74%,#e6dfbf_80%,#a9cfd0_88%,#4b95ba_100%)]">
        <div className="absolute top-0 right-0 h-full w-2 bg-[linear-gradient(180deg,#0a4aa0_0%,#1a63b8_30%,#3f8a9c_56%,#2f6a78_64%,#3b5160_72%,#a09d86_82%,#5d8378_92%,#4a4f48_100%)]" />
        <div className="absolute right-0 bottom-0 left-0 h-2 bg-[linear-gradient(90deg,#7fb9c0_0%,#4b95ba_10%,#4d9ab5_60%,#4c89a0_68%,#4d5a54_75%,#5b4f3c_85%,#3f4a48_100%)]" />
        <span className="absolute top-[466px] left-[2px] text-[10px] text-white">E</span>

        <div className="relative mx-2 mb-2 flex min-h-0 flex-1 flex-col rounded-t-[4px] border border-[#3c3f45] bg-[#535353] px-[3px] pb-[2px]">
          <MenuBar />
          <ControlBar />
          <div className="flex min-h-0 flex-1 border-b border-[#3f3f3f]">
            <ToolPanel />
            <DocumentArea />
            <div className="flex w-[353px] shrink-0 flex-col border-l-2 border-[#3f3f3f]">
              <div className="flex h-[14px] shrink-0 items-center justify-between bg-[#454545] pr-[6px] pl-10">
                <DoubleChevron dir="left" />
                <DoubleChevron dir="right" />
              </div>
              <div className="flex min-h-0 flex-1">
                <div className="flex w-[59px] shrink-0 border-r-2 border-[#404040]">
                  <PanelDock />
                </div>
                <div className="flex min-w-0 flex-1 border-r border-[#444444]">
                  <PropertiesPanel />
                </div>
              </div>
            </div>
          </div>
        </div>

        <Recorder />
      </div>
    </div>
  );
}
